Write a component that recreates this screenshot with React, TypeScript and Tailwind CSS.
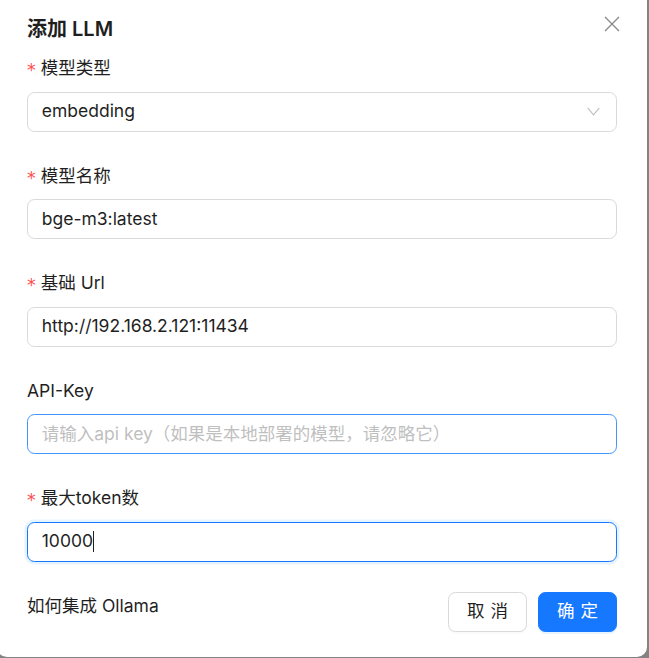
import React from "react";

const font = { fontFamily: 'Inter, "Noto Sans CJK SC", sans-serif' };

function Label({ text, required }: { text: string; required?: boolean }) {
  return (
    <div className="flex items-center leading-[27.5px] pb-[10px] text-[17.5px] text-[#1f1f1f]">
      {required && (
        <span className="inline-block w-[8.75px] mr-[5px] text-[17.5px] text-[#ff4d4f] translate-y-[3px]" style={{ fontFamily: '"DejaVu Sans", sans-serif' }}>
          *
        </span>
      )}
      <span>{text}</span>
    </div>
  );
}

function Item({ children, label, required }: { children: React.ReactNode; label: string; required?: boolean }) {
  return (
    <div className="mb-[30px]">
      <Label text={label} required={required} />
      {children}
    </div>
  );
}

export default function App() {
  return (
    <div className="w-[649px] h-[658px] bg-[#838383] overflow-hidden" style={font}>
      <div className="relative -mt-[11px] -ml-[3px] w-[650px] bg-white rounded-[10px] pt-[25px] px-[30px] pb-[25px]">
        <div className="h-[30px] leading-[30px] mb-[10px] text-[20px] font-semibold text-[#1f1f1f]">添加 LLM</div>
        <button className="absolute top-[21px] right-[21px] w-[27.5px] h-[27.5px] flex items-center justify-center">
          <svg width="16" height="16" viewBox="0 0 16 16" fill="none">
            <path d="M1 1 L15 15 M15 1 L1 15" stroke="#8c8c8c" strokeWidth="1.4" />
          </svg>
        </button>

        <Item label="模型类型" required>
          <div className="h-[40px] border border-[#d9d9d9] rounded-[7.5px] px-[13.75px] flex items-center justify-between text-[17.5px] text-[#1f1f1f]">
            <span>embedding</span>
            <svg width="13" height="9" viewBox="0 0 13 9" fill="none" className="mr-[2px]">
              <path d="M0.7 0.8 L6.5 7.8 L12.3 0.8" stroke="#bfbfbf" strokeWidth="1.1" />
            </svg>
          </div>
        </Item>

        <Item label="模型名称" required>
          <div className="h-[40px] border border-[#d9d9d9] rounded-[7.5px] px-[13.75px] flex items-center text-[17.5px] text-[#1f1f1f]">
            bge-m3:latest
          </div>
        </Item>

        <Item label="基础 Url" required>
          <div className="h-[40px] border border-[#d9d9d9] rounded-[7.5px] px-[13.75px] flex items-center text-[17.5px] text-[#1f1f1f]">
            http://192.168.2.121:11434
          </div>
        </Item>

        <Item label="API-Key">
          <div className="h-[40px] border border-[#4096ff] rounded-[7.5px] px-[13.75px] flex items-center text-[17.5px] text-[#bfbfbf]">
            请输入api key（如果是本地部署的模型，请忽略它）
          </div>
        </Item>

        <Item label="最大token数" required>
          <div className="h-[40px] border border-[#1677ff] rounded-[7.5px] px-[13.75px] flex items-center text-[17.5px] text-[#1f1f1f] shadow-[0_0_0_2.5px_rgba(5,145,255,0.1)]">
            <span>10000</span>
            <span className="inline-block w-[1px] h-[21px] bg-[#1f1f1f]" />
          </div>
        </Item>

        <div className="flex justify-between items-start">
          <div className="leading-[27.5px] text-[17.5px] text-[#1f1f1f]">如何集成 Ollama</div>
          <div className="flex gap-[11px]">
            <button className="w-[79px] h-[40px] flex items-center justify-center whitespace-nowrap rounded-[7.5px] border border-[#d9d9d9] bg-white text-[17.5px] text-[#1f1f1f] shadow-[0_2px_0_rgba(0,0,0,0.02)]">
              <span className="tracking-[0.34em] -mr-[0.34em]">取消</span>
            </button>
            <button className="w-[79px] h-[40px] flex items-center justify-center whitespace-nowrap rounded-[7.5px] border border-[#1677ff] bg-[#1677ff] text-[17.5px] text-white shadow-[0_2px_0_rgba(5,145,255,0.1)]">
              <span className="tracking-[0.34em] -mr-[0.34em]">确定</span>
            </button>
          </div>
        </div>
      </div>
    </div>
  );
}
